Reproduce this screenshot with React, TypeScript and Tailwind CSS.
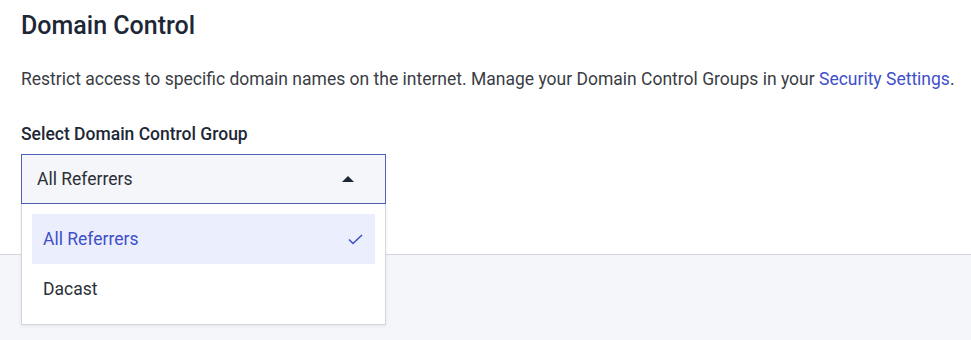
import React, { useState } from "react";

const options = ["All Referrers", "Dacast"];

export default function App() {
  const [selected, setSelected] = useState("All Referrers");
  const [open, setOpen] = useState(true);

  return (
    <div className="w-[971px] h-[340px] bg-[#f5f6fa] flex flex-col font-['Roboto',sans-serif] text-[#222a36] overflow-hidden">
      {/* Section */}
      <div className="bg-white border-b border-[#d3d6de] h-[255px] px-[21px] pt-[12px] shrink-0">
        <h2 className="text-[25px] leading-[28px] font-medium text-[#1e2736]">Domain Control</h2>
        <p className="mt-[29px] text-[17.5px] leading-[20px] text-[#3a3d44] whitespace-nowrap">
          Restrict access to specific domain names on the internet. Manage your Domain Control Groups in your{" "}
          <a href="#" className="text-[#4050c8]">Security Settings</a>.
        </p>
        <label className="block mt-[35px] text-[17.5px] leading-[20px] font-medium text-[#1e2736]">
          Select Domain Control Group
        </label>

        <div className="relative mt-[10px] w-[365px] z-10">
          <button
            type="button"
            onClick={() => setOpen(!open)}
            className="w-full h-[50px] flex items-center justify-between border border-[#5060b8] bg-[#f5f6fa] pl-[15px] pr-[31px] text-[17.5px] text-[#2b2f36]"
          >
            <span>{selected}</span>
            <svg width="12" height="6" viewBox="0 0 12 6" className={open ? "" : "rotate-180"}>
              <path d="M0 6 L6 0 L12 6 Z" fill="#1e2736" />
            </svg>
          </button>

          {open && (
            <div className="absolute top-full left-0 w-full bg-white border border-[#d3d6de] border-t-0 shadow-[0_1px_3px_rgba(0,0,0,0.08)] px-[10px] py-[10px]">
              {options.map((opt) => {
                const active = opt === selected;
                return (
                  <div
                    key={opt}
                    onClick={() => {
                      setSelected(opt);
                      setOpen(false);
                    }}
                    className={`h-[50px] flex items-center justify-between pl-[11px] pr-[12px] text-[17.5px] cursor-pointer ${
                      active ? "bg-[#ebeefc] text-[#4050c8]" : "text-[#2b2f36]"
                    }`}
                  >
                    <span>{opt}</span>
                    {active && (
                      <svg width="15" height="11" viewBox="0 0 15 11" fill="none">
                        <path d="M1 5.5 L5 9.5 L14 1" stroke="#4050c8" strokeWidth="1.6" />
                      </svg>
                    )}
                  </div>
                );
              })}
            </div>
          )}
        </div>
      </div>
      <div className="flex-1" />
    </div>
  );
}
